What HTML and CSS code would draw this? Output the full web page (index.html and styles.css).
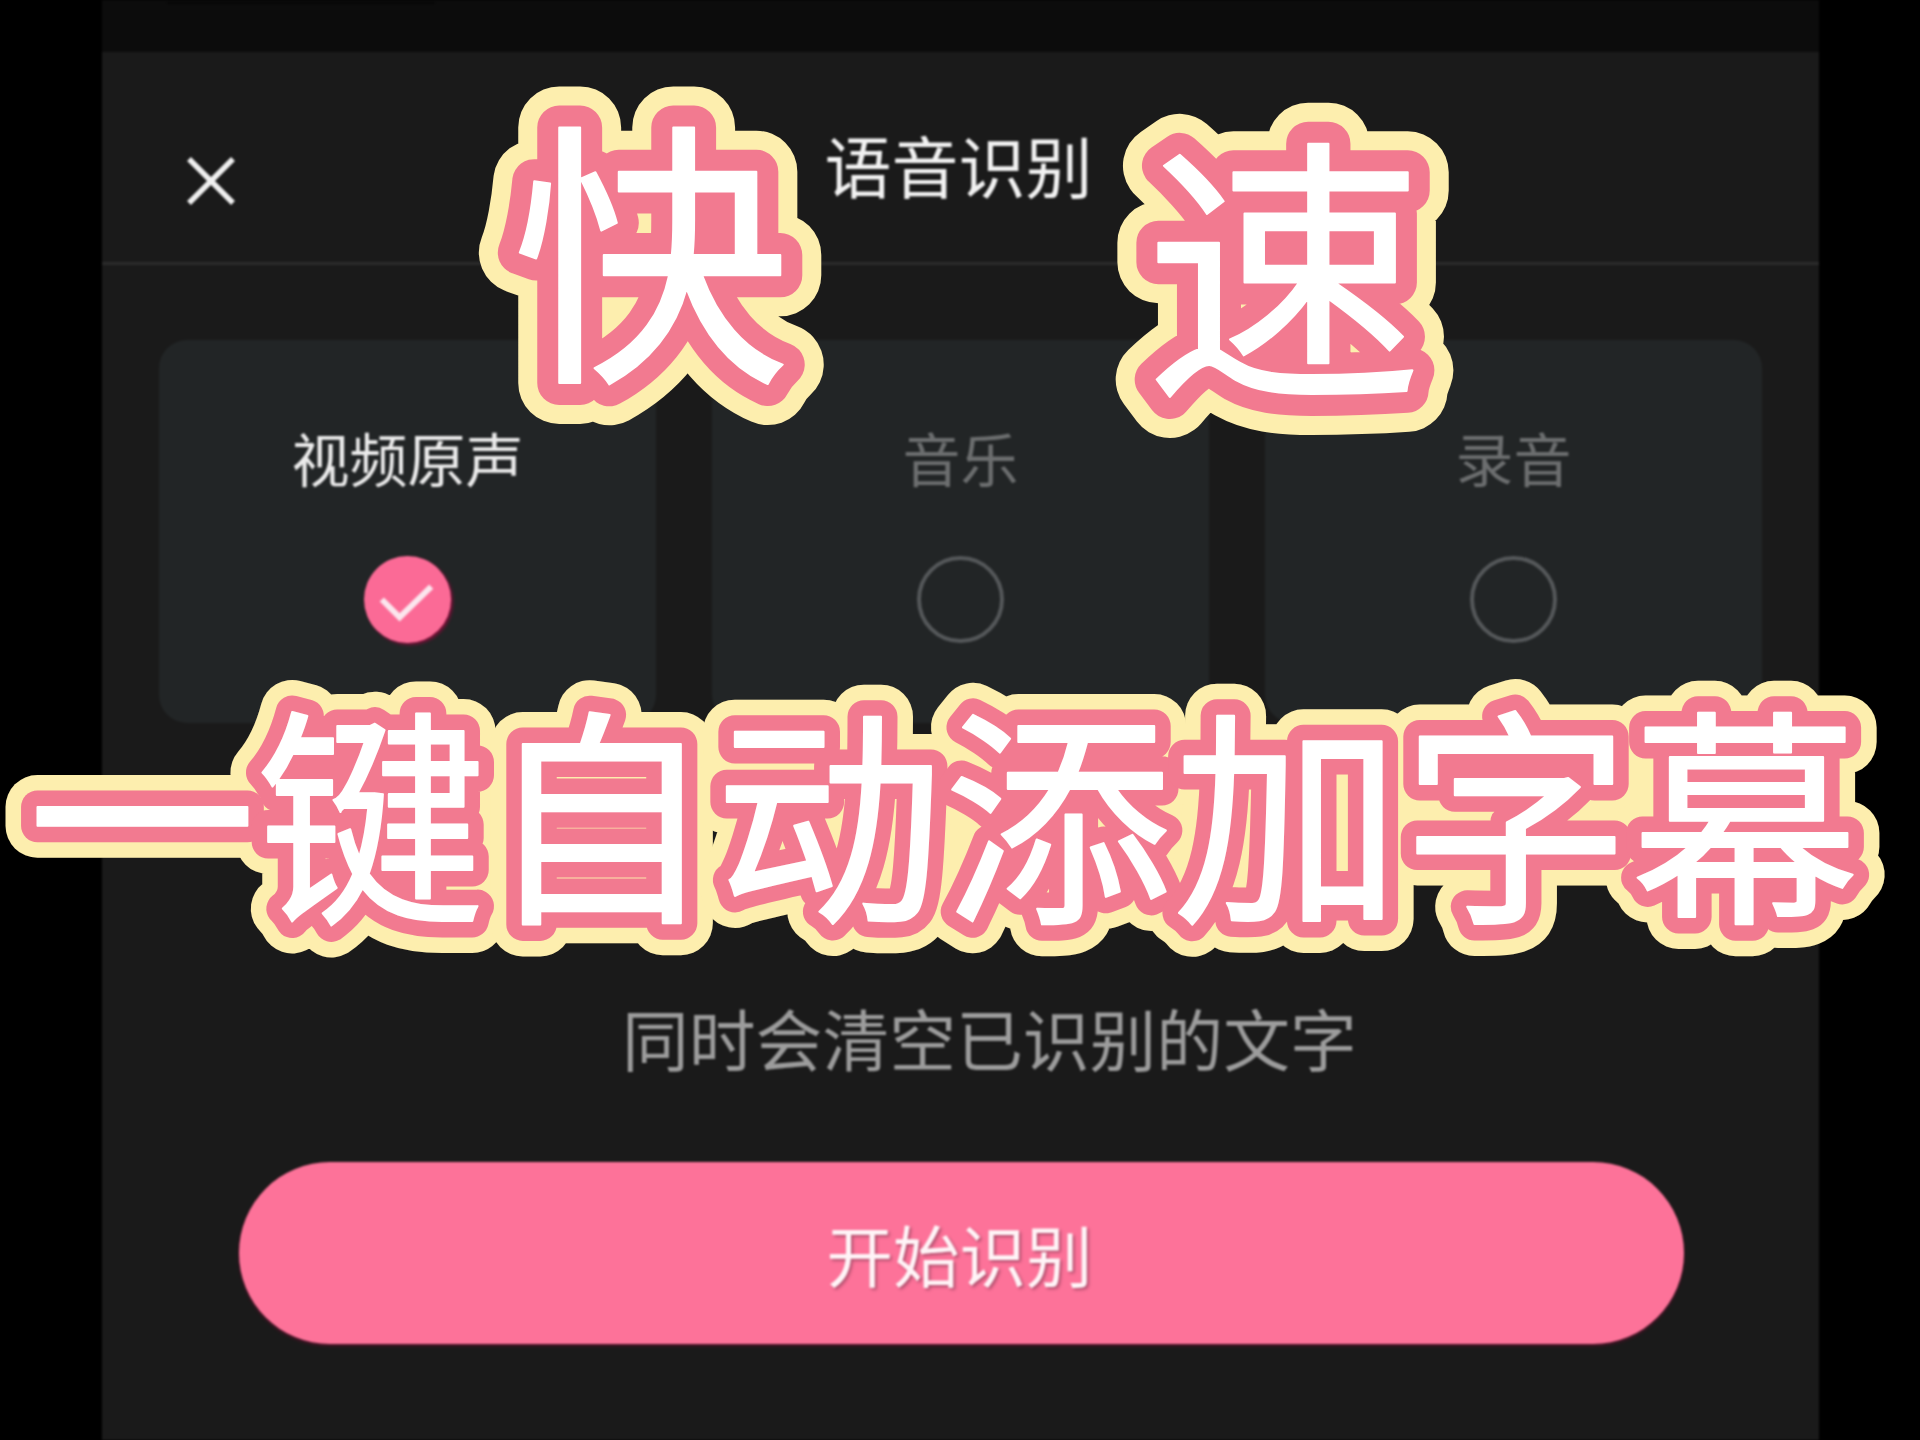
FILE: index.html
```html
<!DOCTYPE html>
<html lang="zh-CN">
<head>
<meta charset="utf-8">
<title>语音识别</title>
<link rel="stylesheet" href="styles.css">
</head>
<body>
<main class="stage">
  <section class="phone">
    <div class="status"><div class="status-mark"></div></div>
    <header class="header">
      <div class="header-side">
        <svg class="close" viewBox="0 0 48 48" aria-hidden="true"><path d="M2 2 L46 46 M46 2 L2 46"/></svg>
      </div>
      <h1 class="title">语音识别</h1>
      <div class="header-side"></div>
    </header>
    <div class="cards">
      <div class="card">
        <div class="card-label card-label-on">视频原声</div>
        <div class="radio radio-on">
          <svg class="tick" viewBox="0 0 88 88" aria-hidden="true"><path d="M18 44 L36 62 L68 31"/></svg>
        </div>
      </div>
      <div class="card">
        <div class="card-label">音乐</div>
        <div class="radio"></div>
      </div>
      <div class="card">
        <div class="card-label">录音</div>
        <div class="radio"></div>
      </div>
    </div>
    <p class="hint">同时会清空已识别的文字</p>
    <button class="start" type="button">开始识别</button>
  </section>
  <svg class="hero" viewBox="0 0 1920 1440">
    <use href="#hero-fast" class="halo-big"/>
    <use href="#hero-speed" class="halo-big"/>
    <use href="#hero-line" class="halo-line"/>
    <use href="#hero-fast" class="rim-big"/>
    <use href="#hero-speed" class="rim-big"/>
    <use href="#hero-line" class="rim-line"/>
    <g class="face">
      <text id="hero-fast" class="word" x="512" y="361">快</text>
      <text id="hero-speed" class="word" x="1145" y="377">速</text>
      <text id="hero-line" class="line" x="27.5" y="906">一键自动添加字幕</text>
    </g>
  </svg>
</main>
</body>
</html>
```

FILE: styles.css
```css
* {
  box-sizing: border-box;
}

html,
body {
  margin: 0;
  padding: 0;
  background: #000;
}

body {
  font-family: "Noto Sans CJK SC", "Noto Sans", sans-serif;
}

.stage {
  position: relative;
  width: 1920px;
  height: 1440px;
  overflow: hidden;
  display: flex;
  padding-left: 102px;
  background: #000;
}

.phone {
  width: 1717px;
  height: 1440px;
  display: flex;
  flex-direction: column;
  background: #1a1a1a;
  filter: blur(0.9px);
}

.status {
  height: 52px;
  flex: none;
  background: #0c0c0c;
  padding: 2px 0 0 65px;
}

.status-mark {
  width: 268px;
  height: 2px;
  background: #060606;
}

.header {
  height: 213px;
  flex: none;
  display: grid;
  grid-template-columns: 1fr auto 1fr;
  align-items: start;
  padding: 77px 4px 0 0;
  border-bottom: 3px solid #2b2b2b;
}

.header-side {
  padding: 28px 0 0 85px;
}

.close {
  display: block;
  width: 48px;
  height: 48px;
  fill: none;
  stroke: #f0f0f0;
  stroke-width: 5.5;
}

.title {
  margin: 0;
  font-size: 67px;
  line-height: 70px;
  font-weight: 400;
  color: #f2f2f2;
}

.cards {
  margin: 75px 57px 0 57px;
  height: 383px;
  flex: none;
  display: grid;
  grid-template-columns: repeat(3, 1fr);
  gap: 56px;
}

.card {
  display: flex;
  flex-direction: column;
  align-items: center;
  padding-top: 84px;
  border-radius: 28px;
  background: #222526;
}

.card-label {
  font-size: 58px;
  line-height: 66px;
  font-weight: 400;
  color: #6c6e6f;
}

.card-label-on {
  color: #ebebeb;
}

.radio {
  width: 87px;
  height: 87px;
  margin-top: 66px;
  border-radius: 50%;
  border: 4px solid #55585a;
}

.radio-on {
  border: none;
  background: #fb6a96;
  box-shadow: 2px 2px 3px #7a1038;
}

.tick {
  display: block;
  width: 87px;
  height: 87px;
  fill: none;
  stroke: #fbe6ee;
  stroke-width: 6;
}

.hint {
  margin: 279px 0 0 520px;
  font-size: 66.8px;
  line-height: 70px;
  color: #9c9c9c;
  white-space: nowrap;
}

.start {
  width: 1445px;
  height: 182px;
  margin: 90px 0 0 137px;
  padding: 0 4px 0 0;
  flex: none;
  border: none;
  border-radius: 91px;
  background: #fd7299;
  box-shadow: 0 2px 3px #4f1228;
  color: #fff4f7;
  font-family: inherit;
  font-size: 66.5px;
  line-height: 70px;
  text-shadow: 2px 2px 3px #b0506e;
}

.hero {
  position: absolute;
  left: 0;
  top: 0;
  width: 1920px;
  height: 1440px;
}

.word,
.line {
  font-family: "Noto Sans CJK SC", sans-serif;
  font-weight: 400;
}

.word {
  font-size: 278px;
}

.line {
  font-size: 229px;
}

.face,
.halo-big,
.halo-line,
.rim-big,
.rim-line {
  stroke-linejoin: round;
  stroke-linecap: round;
}

.face {
  fill: #fff;
  stroke: #fff;
  stroke-width: 2px;
}

.halo-big,
.halo-line {
  stroke: #fdeeae;
  fill: #fdeeae;
}

.rim-big,
.rim-line {
  stroke: #f27a90;
  fill: #f27a90;
}

.halo-big {
  stroke-width: 82px;
}

.rim-big {
  stroke-width: 44px;
}

.halo-line {
  stroke-width: 64px;
}

.rim-line {
  stroke-width: 33px;
}
```
